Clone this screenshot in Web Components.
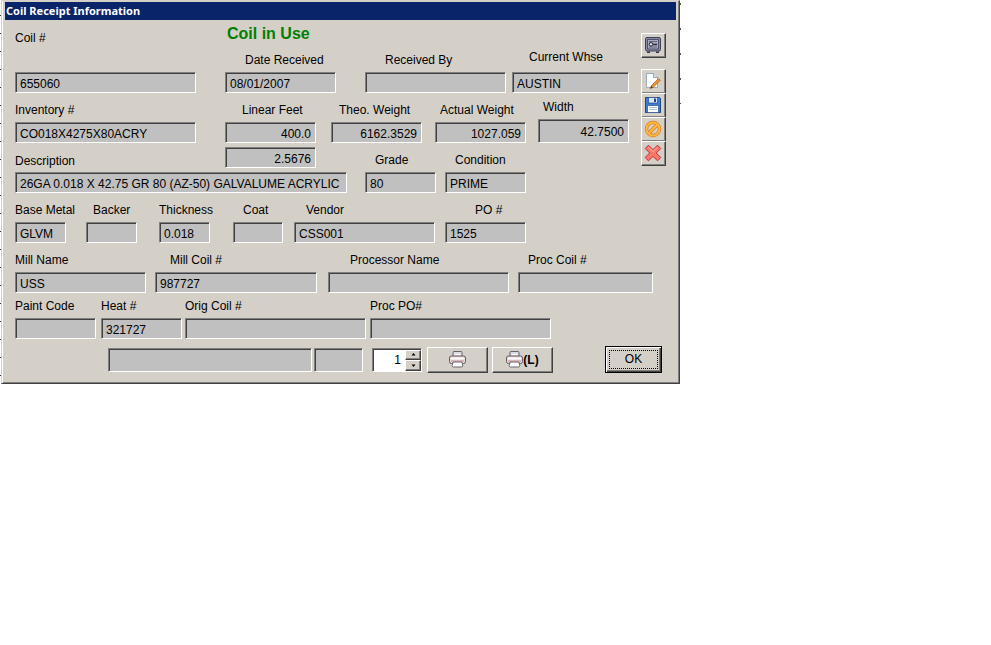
<!DOCTYPE html>
<html lang="en">
<head>
<meta charset="utf-8">
<title>Coil Receipt Information</title>
<style>
  body {
    margin: 0;
    background: #fff;
    color: #000;
    font: 12px/14px "Liberation Sans", Arial, sans-serif;
  }
  .desk { display: flex; align-items: stretch; }
</style>
</head>
<body>
<div class="desk">
  <grid-edge side="left"></grid-edge>
  <app-window heading="Coil Receipt Information">
    <field-row slot="upper" style="--top:5px">
      <coil-field label="Coil #" value="655060" style="--w:181;--gap:27px"></coil-field>
      <coil-field label="Date Received" value="08/01/2007" style="--w:111;--before:29px;--indent:20px">
        <status-text slot="above">Coil in Use</status-text>
      </coil-field>
      <coil-field label="Received By" style="--w:141;--before:29px;--indent:20px"></coil-field>
      <coil-field label="Current Whse" value="AUSTIN" style="--w:117;--before:6px;--indent:17px;--gap:8px"></coil-field>
    </field-row>
    <field-row slot="upper" style="--top:7px">
      <coil-field label="Inventory #" value="CO018X4275X80ACRY" style="--w:181"></coil-field>
      <coil-field label="Linear Feet" value="400.0" style="--w:91;--before:29px;--indent:17px;--align:right"></coil-field>
      <coil-field label="Theo. Weight" value="6162.3529" style="--w:91;--before:15px;--indent:8px;--align:right"></coil-field>
      <coil-field label="Actual Weight" value="1027.059" style="--w:91;--before:13px;--indent:5px;--align:right"></coil-field>
      <coil-field label="Width" value="42.7500" style="--w:91;--before:12px;--indent:5px;--align:right;--h:24px"></coil-field>
    </field-row>
    <field-row slot="upper" style="--top:4px;--right:103px">
      <coil-field label="Description" value="26GA 0.018 X 42.75 GR 80 (AZ-50) GALVALUME ACRYLIC COATED" style="--w:332;--gap:4px">
        <coil-field slot="extra" name="Linear feet ratio" value="2.5676" style="--gap:0px;--align:right;flex:0 0 91px;margin-right:31px"></coil-field>
      </coil-field>
      <coil-field label="Grade" value="80" style="--w:71;--before:18px;--indent:10px"></coil-field>
      <coil-field label="Condition" value="PRIME" style="--w:81;--before:9px;--indent:10px"></coil-field>
    </field-row>

    <tool-bar slot="tools"></tool-bar>

    <field-row slot="lower" style="--right:140px">
      <coil-field label="Base Metal" value="GLVM" style="--w:51"></coil-field>
      <coil-field label="Backer" style="--w:51;--before:20px;--indent:7px"></coil-field>
      <coil-field label="Thickness" value="0.018" style="--w:51;--before:22px"></coil-field>
      <coil-field label="Coat" style="--w:50;--before:23px;--indent:10px"></coil-field>
      <coil-field label="Vendor" value="CSS001" style="--w:141;--before:11px;--indent:12px"></coil-field>
      <coil-field label="PO #" value="1525" style="--w:81;--before:10px;--indent:30px"></coil-field>
    </field-row>
    <field-row slot="lower" style="--right:13px">
      <coil-field label="Mill Name" value="USS" style="--w:131"></coil-field>
      <coil-field label="Mill Coil #" value="987727" style="--w:162;--before:9px;--indent:15px"></coil-field>
      <coil-field label="Processor Name" style="--w:181;--before:11px;--indent:22px"></coil-field>
      <coil-field label="Proc Coil #" style="--w:135;--before:9px;--indent:10px"></coil-field>
    </field-row>
    <field-row slot="lower" style="--top:6px;--right:115px">
      <coil-field label="Paint Code" style="--w:81"></coil-field>
      <coil-field label="Heat #" value="321727" style="--w:81;--before:5px"></coil-field>
      <coil-field label="Orig Coil #" style="--w:181;--before:3px"></coil-field>
      <coil-field label="Proc PO#" style="--w:181;--before:4px"></coil-field>
    </field-row>
    <field-row slot="lower" style="--top:7px;--left:93px;--right:4px;--cross:center">
      <coil-field name="Note" style="--w:204;--h:24px"></coil-field>
      <coil-field name="Code" style="--w:49;--before:2px;--h:24px"></coil-field>
      <copy-spinner value="1"></copy-spinner>
      <print-button label="Print"></print-button>
      <print-button label="Print landscape">(L)</print-button>
      <ok-button>OK</ok-button>
    </field-row>
  </app-window>
  <grid-edge side="right"></grid-edge>
</div>

<script>
class Base extends HTMLElement {
  connectedCallback() {
    if (this.shadowRoot) return;
    this.attachShadow({ mode: "open" }).innerHTML = this.render();
  }
  attr(name) { return this.getAttribute(name) || ""; }
}

const raised = `
  border: 1px solid; border-color: #fff #404040 #404040 #fff;
  box-shadow: inset -1px -1px #808080;
  background: #d4d0c8; color: #000;`;

/* Slivers of the data grid that lies behind the dialog */
customElements.define("grid-edge", class extends Base {
  render() {
    return `<style>
      :host { display: block; flex: none; width: 1px; }
      :host([side=left]) { background: repeating-linear-gradient(#fff 0 15px, #333 15px 16px, #fff 16px 18px); }
      :host([side=right]) { height: 104px; background: repeating-linear-gradient(#fff 0 3px, #555 3px 5px, #fff 5px 25px); }
    </style>`;
  }
});

customElements.define("app-window", class extends Base {
  render() {
    return `<style>
      :host {
        display: block; box-sizing: border-box; flex: 0 1 679px; min-width: 0;
        border: 1px solid; border-color: #d4d0c8 #404040 #404040 #d4d0c8;
        box-shadow: inset 1px 0 #fff, inset -1px -1px #808080;
        background: #d4d0c8; padding: 1px 3px 10px;
      }
      h1 {
        margin: 0; padding: 0 1px; background: #0a246a; color: #fff;
        font: bold 11px/18px "Noto Sans", Tahoma, sans-serif;
      }
      .body { padding: 0 10px; }
      .top { display: flex; gap: 12px; }
      .rows { flex: 1; min-width: 0; }
    </style>
    <h1>${this.attr("heading")}</h1>
    <div class="body">
      <div class="top">
        <div class="rows"><slot name="upper"></slot></div>
        <slot name="tools"></slot>
      </div>
      <slot name="lower"></slot>
    </div>`;
  }
});

customElements.define("field-row", class extends Base {
  render() {
    return `<style>
      :host {
        display: flex; align-items: var(--cross, flex-end);
        margin-top: var(--top, 10px);
        padding: 0 var(--right, 0px) 0 var(--left, 0px);
      }
    </style><slot></slot>`;
  }
});

customElements.define("status-text", class extends Base {
  render() {
    return `<style>
      :host { display: block; margin: 0 0 10px 2px; color: #008000; font-weight: bold; font-size: 16px; line-height: 18px; white-space: nowrap; }
    </style><slot></slot>`;
  }
});

customElements.define("coil-field", class extends Base {
  render() {
    const label = this.attr("label");
    const head = label
      ? `<div class="head"><label for="box">${label}</label><slot name="extra"></slot></div>` : "";
    return `<style>
      :host { display: block; flex: var(--w) 1 0; min-width: 0; margin-left: var(--before, 0px); }
      .head { display: flex; justify-content: space-between; align-items: flex-end; margin-bottom: var(--gap, 5px); }
      label { padding-left: var(--indent, 0px); white-space: nowrap; }
      input {
        display: block; box-sizing: border-box; width: 100%; height: var(--h, 21px); margin: 0;
        padding: 2px 4px 0; border: 1px solid; border-color: #808080 #fff #fff #808080; border-radius: 0;
        box-shadow: inset 1px 1px #404040; outline: none;
        background: #c0c0c0; color: #000; font: inherit; text-align: var(--align, left);
      }
    </style>
    <slot name="above"></slot>${head}
    <input id="box" type="text" readonly value="${this.attr("value")}"${label ? "" : ` aria-label="${this.attr("name")}"`}>`;
  }
});

customElements.define("tool-bar", class extends Base {
  render() {
    return `<style>
      :host { display: flex; flex-direction: column; flex: none; padding-top: 13px; }
      button { ${raised} box-sizing: border-box; width: 25px; height: 25px; margin: 0 0 -1px; padding: 0 1px 1px 0; display: grid; place-items: center; }
      .vault { margin-bottom: 11px; }
      svg { display: block; width: 18px; height: 18px; }
    </style>
    <button class="vault" type="button" aria-label="Vault"><svg viewBox="0 0 18 18">
      <rect x="1.5" y="1.5" width="15" height="13.5" rx="1.5" fill="#8b8ba3" stroke="#3f3f57"/>
      <path d="M3 15.5h3v1.500H3zM12 15.500h3v1.500h-3z" fill="#33334a"/>
      <rect x="3.500" y="3.500" width="11" height="9.500" fill="#a9a9bf" stroke="#50506a"/>
      <path d="M5 5.500h8M5 11h8" stroke="#65657d"/>
      <circle cx="7" cy="8.300" r="1.800" fill="#ddd" stroke="#29293c"/>
      <path d="M9 8.500h4" stroke="#29293c" stroke-width="1.500"/></svg></button>
    <button type="button" aria-label="Edit"><svg viewBox="0 0 18 18">
      <path d="M2.500 1.500h7l4 4v10h-11z" fill="#fff" stroke="#9aacba"/>
      <path d="M9.500 1.500v4h4" fill="#d7e7ef" stroke="#8ba6b8"/>
      <path d="M14.500 6.500l1.800 1.800-7 7-3 1.200 1.200-3z" fill="#e99435" stroke="#a85a18" stroke-width=".7"/>
      <path d="M6.300 16.500l1-2.500 1.500 1.500z" fill="#333"/></svg></button>
    <button type="button" aria-label="Save"><svg viewBox="0 0 18 18">
      <path d="M1.500 1.500h14l1 1v14h-15z" fill="#3f7bd0" stroke="#1c4489"/>
      <path d="M4.500 1.500h9v5.500h-9z" fill="#d8e7f5" stroke="#244f91" stroke-width=".7"/>
      <path d="M10 2.500h2v3.500h-2z" fill="#23437c"/>
      <path d="M3.500 9.500h11v7h-11z" fill="#fff" stroke="#244f91" stroke-width=".7"/>
      <path d="M5 11.500h8M5 13.500h8" stroke="#aac8df"/></svg></button>
    <button type="button" aria-label="Cancel"><svg viewBox="0 0 18 18" fill="none">
      <circle cx="9" cy="9" r="6.500" stroke="#e07a18" stroke-width="3.400"/>
      <path d="M4.500 13.500l9-9" stroke="#e07a18" stroke-width="3.400"/>
      <circle cx="9" cy="9" r="6.500" stroke="#ffb840" stroke-width="2"/>
      <path d="M4.500 13.500l9-9" stroke="#ffb840" stroke-width="2"/></svg></button>
    <button type="button" aria-label="Delete"><svg viewBox="0 0 18 18">
      <path d="M4.500 1.200L9 5.700l4.500-4.500 3.300 3.300L12.300 9l4.500 4.500-3.300 3.300L9 12.300l-4.500 4.500-3.300-3.300L5.700 9 1.200 4.500z" fill="#f8796b" stroke="#c32c29" stroke-linejoin="round"/>
      <path d="M4.500 3.200L9 7.700l4.500-4.500" fill="none" stroke="#ffb5aa"/></svg></button>`;
  }
});

customElements.define("copy-spinner", class extends Base {
  render() {
    return `<style>
      :host {
        display: flex; box-sizing: border-box; flex: none; width: 50px; height: 24px; margin-left: 9px; padding: 1px 0 0 1px;
        border: 1px solid; border-color: #808080 #fff #fff #808080; box-shadow: inset 1px 1px #404040; background: #fff;
      }
      input { flex: 1; min-width: 0; padding: 0 4px; margin: 0; border: 0; outline: none; background: #fff; color: #000; font: inherit; text-align: right; appearance: textfield; }
      input::-webkit-inner-spin-button { appearance: none; }
      .steps { display: flex; flex-direction: column; width: 16px; }
      button { ${raised} flex: 1; min-height: 0; padding: 0; margin: 0; display: grid; place-items: center; }
      svg { display: block; width: 5px; height: 3px; }
    </style>
    <input type="number" aria-label="Copies" value="${this.attr("value")}">
    <div class="steps">
      <button type="button" aria-label="More"><svg viewBox="0 0 5 3"><path d="M2.500 0L4.500 2.500h-4z"/></svg></button>
      <button type="button" aria-label="Fewer"><svg viewBox="0 0 5 3"><path d="M2.500 3L4.500 .5h-4z"/></svg></button>
    </div>`;
  }
});

customElements.define("print-button", class extends Base {
  render() {
    return `<style>
      :host { display: block; flex: none; margin-left: 5px; }
      :host(:last-of-type) { margin-left: 4px; }
      button {
        ${raised} box-sizing: border-box; width: 61px; height: 26px; padding: 0; margin: 0;
        display: flex; align-items: center; justify-content: center;
        font: inherit; font-weight: bold;
      }
      svg { display: block; width: 17px; height: 17px; }
    </style>
    <button type="button" aria-label="${this.attr("label")}">
      <svg viewBox="0 0 17 17">
        <path d="M4 1.500q0-1 1-1h7q1 0 1 1v4H4z" fill="#dcdce4" stroke="#66666e"/>
        <path d="M5.500 3.500h6" stroke="#fff"/>
        <rect x=".5" y="5" width="16" height="7.500" rx="2" fill="#ecdcde" stroke="#66585e"/>
        <path d="M2 7.500h13" stroke="#fff" stroke-width="1.500"/>
        <path d="M2 10h13" stroke="#c78d92"/>
        <path d="M4 11h9l.8 3.500q0 1.500-1.300 1.500h-8q-1.300 0-1.300-1.500z" fill="#fff" stroke="#66666e"/>
      </svg><slot></slot>
    </button>`;
  }
});

customElements.define("ok-button", class extends Base {
  render() {
    return `<style>
      :host { display: block; flex: none; margin-left: 52px; }
      button {
        box-sizing: border-box; width: 57px; height: 27px; margin: 0; padding: 2px;
        border: 1px solid #000; background: #d4d0c8; color: #000; font: inherit;
        box-shadow: inset 1px 1px #fff, inset -1px -1px #404040, inset -2px -2px #808080;
      }
      span { display: block; border: 1px dotted #000; margin: 0 1px; line-height: 17px; }
    </style>
    <button type="button"><span><slot></slot></span></button>`;
  }
});
</script>
</body>
</html>
